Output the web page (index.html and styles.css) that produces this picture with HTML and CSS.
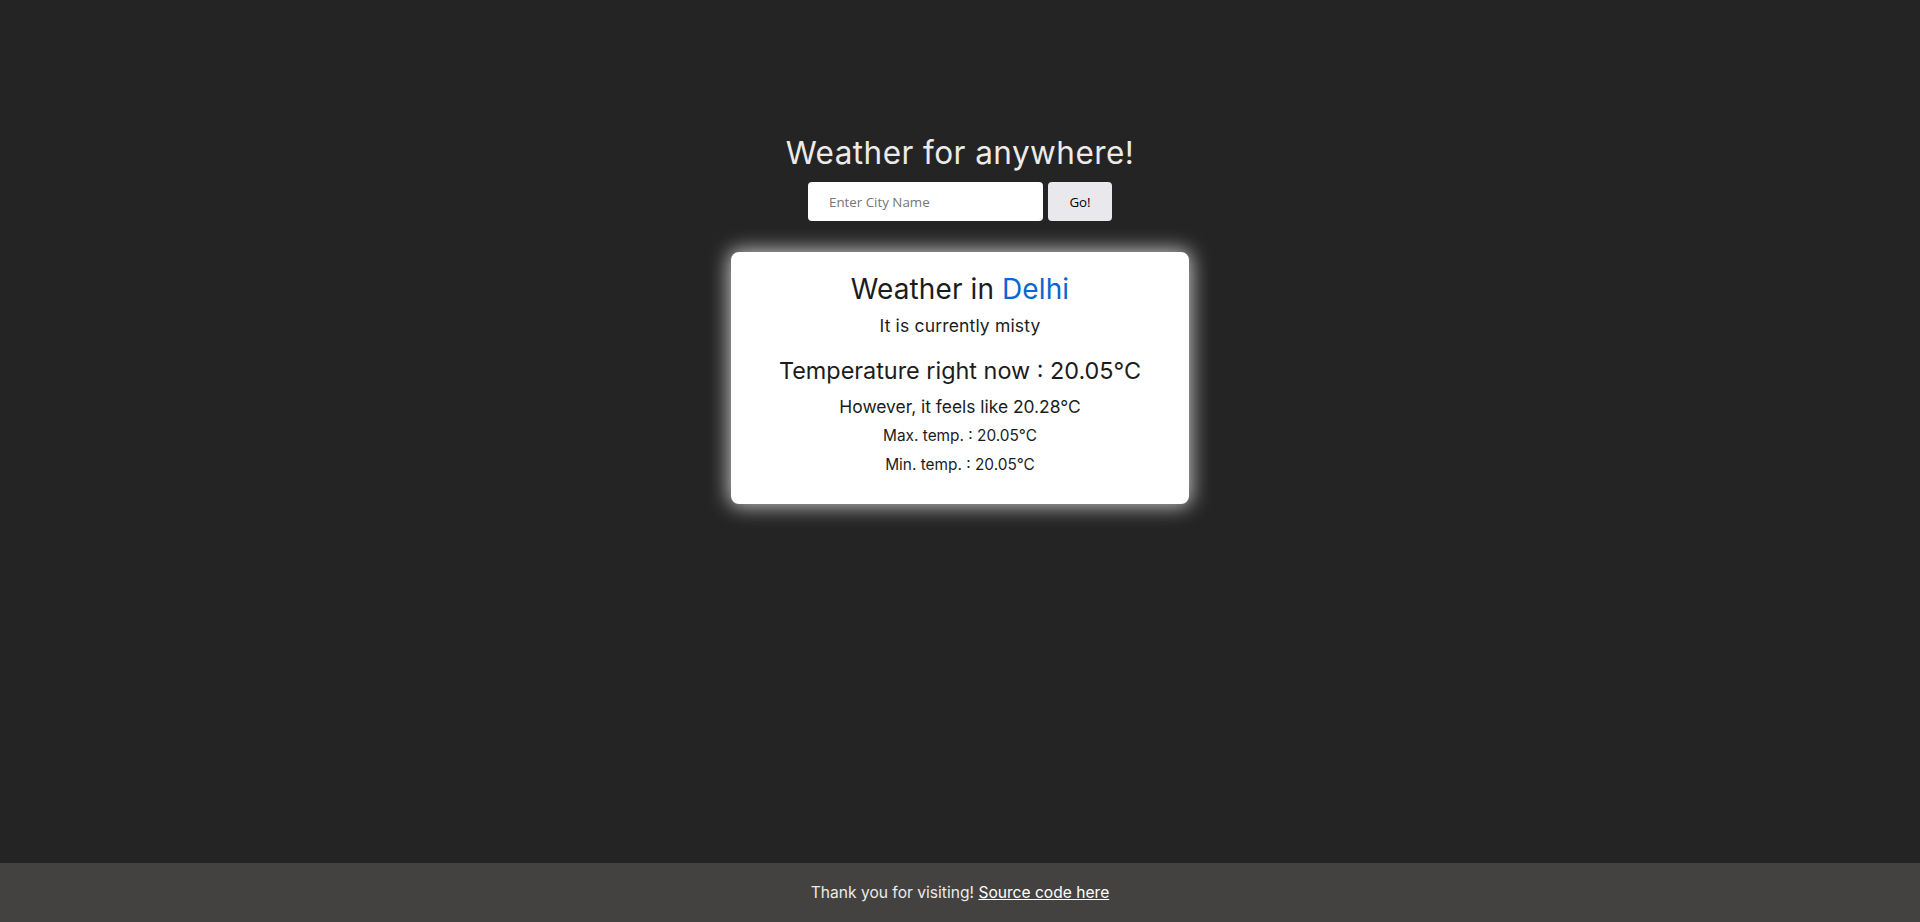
FILE: index.html
```html
<!DOCTYPE html>
<html lang="en">
<head>
<meta charset="utf-8">
<title>Weather for anywhere!</title>
<link rel="stylesheet" href="styles.css">
</head>
<body>
<main class="main">
  <h1 class="title">Weather for anywhere!</h1>
  <form class="search">
    <input class="search-input" type="text" placeholder="Enter City Name">
    <button class="search-btn" type="button">Go!</button>
  </form>
  <section class="card">
    <h2 class="card-heading">Weather in <span class="city">Delhi</span></h2>
    <p class="desc">It is currently misty</p>
    <p class="temp">Temperature right now : 20.05°C</p>
    <p class="feels">However, it feels like 20.28°C</p>
    <p class="minmax minmax-first">Max. temp. : 20.05°C</p>
    <p class="minmax">Min. temp. : 20.05°C</p>
  </section>
</main>
<footer class="footer">
  <p class="footer-text">Thank you for visiting! <a class="footer-link" href="#">Source code here</a></p>
</footer>
</body>
</html>
```
FILE: styles.css
```css
html, body {
  margin: 0;
  padding: 0;
}

body {
  height: 100vh;
  display: flex;
  flex-direction: column;
  background: #242424;
  font-family: "Inter", "Roboto", sans-serif;
}

.main {
  flex: 1;
  display: flex;
  flex-direction: column;
  align-items: center;
  padding-top: 134px;
}

.title {
  margin: 0;
  font-size: 31.5px;
  line-height: 38px;
  font-weight: 400;
  letter-spacing: 0.45px;
  color: #ecebea;
}

.search {
  margin: 10px 0 0;
  display: flex;
  gap: 5px;
}

.search-input {
  box-sizing: border-box;
  width: 235px;
  height: 39px;
  border: none;
  border-radius: 4px;
  padding: 0 0 0 21px;
  background: #fff;
  font-family: "Open Sans", sans-serif;
  font-size: 13.333px;
  color: #222;
  outline: none;
}

.search-input::placeholder {
  color: #757575;
}

.search-btn {
  box-sizing: border-box;
  width: 64px;
  height: 39px;
  border: none;
  border-radius: 4px;
  background: #e9e9ed;
  font-family: "Open Sans", sans-serif;
  font-size: 13.333px;
  color: #000;
  padding: 0;
}

.card {
  box-sizing: border-box;
  margin-top: 31px;
  width: 458px;
  background: #fff;
  border-radius: 8px;
  padding: 20px 0 29px;
  box-shadow: 0 0 20px 2px rgba(255, 255, 255, 0.75);
  text-align: center;
  color: #1c1c1c;
}

.card-heading {
  margin: 0;
  font-size: 28px;
  line-height: 34px;
  font-weight: 400;
  letter-spacing: 0.1px;
}

.city {
  color: #0a66d2;
}

.desc {
  margin: 9px 0 0;
  font-size: 17.5px;
  line-height: 22px;
  letter-spacing: 0.16px;
}

.temp {
  margin: 20px 0 0;
  font-size: 23.4px;
  line-height: 28px;
}

.feels {
  margin: 11px 0 0;
  font-size: 17.4px;
  line-height: 22px;
}

.minmax {
  margin: 9px 0 0;
  font-size: 15.4px;
  line-height: 20px;
}

.minmax-first {
  margin-top: 8px;
}

.footer {
  height: 59px;
  flex: none;
  background: #434240;
  display: flex;
  align-items: center;
  justify-content: center;
}

.footer-text {
  margin: 0;
  font-size: 15.6px;
  line-height: 20px;
  color: #ecebea;
}

.footer-link {
  color: #fff;
  text-decoration: underline;
}
```
